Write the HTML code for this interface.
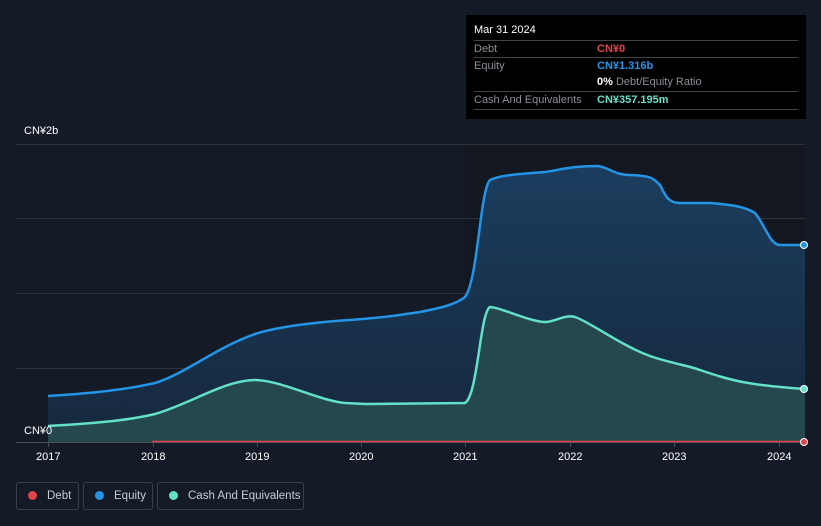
<!DOCTYPE html>
<html><head><meta charset="utf-8"><style>
body{margin:0;width:821px;height:526px;background:#151b26;font-family:"Liberation Sans",sans-serif;overflow:hidden;position:relative}
.t{position:absolute;font-size:11px;color:#fff}
.tip{position:absolute;left:466px;top:15px;width:340px;height:104px;background:#000;font-size:11px}
.row{position:absolute;left:8px;width:324px;border-top:1px solid #444;height:17px;line-height:17px;color:#8a8f97}
.lg{position:absolute;top:482px;height:28px;border:1px solid #3a404b;border-radius:3px;color:#c8ccd2;font-size:11.5px;line-height:26px;box-sizing:border-box;white-space:nowrap}
.lg i{display:inline-block;width:9px;height:9px;border-radius:50%;margin:0 10px 0 11px;vertical-align:-1px}
</style></head><body>
<svg width="821" height="526" style="position:absolute;left:0;top:0">
<defs>
<linearGradient id="ge" x1="0" y1="0" x2="0" y2="1"><stop offset="0" stop-color="#1b3d5e"/><stop offset="1" stop-color="#16283d"/></linearGradient>
</defs>
<rect x="465" y="144" width="340" height="298" fill="#121720"/>
<g stroke="#2d333d" stroke-width="1">
<line x1="16" y1="144.5" x2="805" y2="144.5"/><line x1="16" y1="218.5" x2="805" y2="218.5"/><line x1="16" y1="293.5" x2="805" y2="293.5"/><line x1="16" y1="368.5" x2="805" y2="368.5"/>
</g>
<path d="M48,396 C80,394 120,391 155,383 C185,374 215,348 255,334 C280,326 320,322 350,320 C380,318 400,315 420,312 C440,308 455,305 465,297 C478,280 480,190 490,180 C500,175 520,174 545,172 C560,170 570,166 598,166 C610,168 615,175 630,175 C650,176 652,177 660,185 C665,195 668,203 680,203 L710,203 C735,205 745,207 755,213 C765,225 770,245 780,245 L805,245 L805,442 L48,442Z" fill="url(#ge)"/>
<path d="M48,426 C100,423 130,420 155,414 C190,404 225,380 255,380 C280,380 320,401 345,403 L365,404 L465,403 C478,395 480,312 490,307 C500,307 530,322 545,322 C555,322 565,314 575,317 C590,322 620,345 650,356 C670,363 690,366 700,370 C730,380 745,385 805,389 L805,442 L48,442Z" fill="#25484f"/>
<path d="M48,396 C80,394 120,391 155,383 C185,374 215,348 255,334 C280,326 320,322 350,320 C380,318 400,315 420,312 C440,308 455,305 465,297 C478,280 480,190 490,180 C500,175 520,174 545,172 C560,170 570,166 598,166 C610,168 615,175 630,175 C650,176 652,177 660,185 C665,195 668,203 680,203 L710,203 C735,205 745,207 755,213 C765,225 770,245 780,245 L805,245" fill="none" stroke="#2394e6" stroke-width="2.5"/>
<path d="M48,426 C100,423 130,420 155,414 C190,404 225,380 255,380 C280,380 320,401 345,403 L365,404 L465,403 C478,395 480,312 490,307 C500,307 530,322 545,322 C555,322 565,314 575,317 C590,322 620,345 650,356 C670,363 690,366 700,370 C730,380 745,385 805,389" fill="none" stroke="#62e0c8" stroke-width="2.5"/>
<line x1="16" y1="442.5" x2="805" y2="442.5" stroke="#4a505a"/>
<line x1="152" y1="441.5" x2="805" y2="441.5" stroke="#e0454a" stroke-width="1.5"/>
<g stroke="#4a505a"><line x1="48.5" y1="442" x2="48.5" y2="447"/><line x1="153.5" y1="442" x2="153.5" y2="447"/><line x1="257.5" y1="442" x2="257.5" y2="447"/><line x1="361.5" y1="442" x2="361.5" y2="447"/><line x1="465.5" y1="442" x2="465.5" y2="447"/><line x1="570.5" y1="442" x2="570.5" y2="447"/><line x1="674.5" y1="442" x2="674.5" y2="447"/><line x1="779.5" y1="442" x2="779.5" y2="447"/></g>
<circle cx="804" cy="245" r="3.5" fill="#2394e6" stroke="#fff" stroke-width="1"/>
<circle cx="804" cy="389" r="3.5" fill="#62e0c8" stroke="#fff" stroke-width="1"/>
<circle cx="804" cy="442" r="3.5" fill="#e0454a" stroke="#fff" stroke-width="1"/>
</svg>
<div class="t" style="left:24px;top:125px">CN¥2b</div>
<div class="t" style="left:24px;top:425px">CN¥0</div>
<div class="t" style="left:36px;top:451px">2017</div>
<div class="t" style="left:141px;top:451px">2018</div>
<div class="t" style="left:245px;top:451px">2019</div>
<div class="t" style="left:349px;top:451px">2020</div>
<div class="t" style="left:453px;top:451px">2021</div>
<div class="t" style="left:558px;top:451px">2022</div>
<div class="t" style="left:662px;top:451px">2023</div>
<div class="t" style="left:767px;top:451px">2024</div>
<div class="tip">
<div style="position:absolute;left:8px;top:9px;color:#fff">Mar 31 2024</div>
<div class="row" style="top:25px">Debt<span style="position:absolute;left:123px;color:#e0454a;font-weight:bold">CN¥0</span></div>
<div class="row" style="top:42px">Equity<span style="position:absolute;left:123px;color:#2394e6;font-weight:bold">CN¥1.316b</span></div>
<div class="row" style="top:59px;border:0"><span style="position:absolute;left:123px"><b style="color:#fff">0%</b> Debt/Equity Ratio</span></div>
<div class="row" style="top:76px">Cash And Equivalents<span style="position:absolute;left:123px;color:#62e0c8;font-weight:bold">CN¥357.195m</span></div>
<div class="row" style="top:94px;height:0"></div>
</div>
<div class="lg" style="left:16px;width:63px"><i style="background:#e0454a"></i>Debt</div>
<div class="lg" style="left:83px;width:70px"><i style="background:#2394e6"></i>Equity</div>
<div class="lg" style="left:157px;width:147px"><i style="background:#62e0c8"></i>Cash And Equivalents</div>
</body></html>
